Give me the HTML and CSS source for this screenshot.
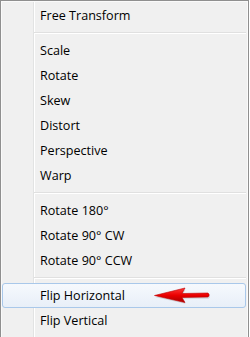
FILE: index.html
```html
<!DOCTYPE html>
<html>
<head>
<meta charset="utf-8">
<link rel="stylesheet" href="styles.css">
</head>
<body>
<div class="menu">
  <div class="item">Free Transform</div>
  <div class="sep"></div>
  <div class="item">Scale</div>
  <div class="item">Rotate</div>
  <div class="item">Skew</div>
  <div class="item">Distort</div>
  <div class="item">Perspective</div>
  <div class="item">Warp</div>
  <div class="sep"></div>
  <div class="item">Rotate 180°</div>
  <div class="item">Rotate 90° CW</div>
  <div class="item">Rotate 90° CCW</div>
  <div class="sep"></div>
  <div class="item hot">Flip Horizontal
    <svg class="arrow" width="58" height="17" viewBox="0 0 58 17">
      <defs>
        <linearGradient id="rg" x1="0" y1="0" x2="0" y2="1">
          <stop offset="0" stop-color="#ff3a3a"/>
          <stop offset="0.5" stop-color="#ea0000"/>
          <stop offset="1" stop-color="#a80000"/>
        </linearGradient>
      </defs>
      <path d="M1 9.5 L31 2 L28 7.5 L54 7 Q57 9 54 11 L28 11 L31 16 Z" fill="#000" opacity="0.12" transform="translate(0.5 0.8)"/>
      <path d="M0.5 8.5 L31 1 L28 6.5 L54 6 Q56.5 8 54 10 L28 10.5 L31 15.5 Z" fill="url(#rg)" stroke="#c00000" stroke-width="0.6" stroke-linejoin="round"/>
    </svg>
  </div>
  <div class="item">Flip Vertical</div>
</div>
</body>
</html>
```
FILE: styles.css
```css
html, body {
  margin: 0;
  padding: 0;
  background: #ffffff;
}
.menu {
  width: 249px;
  height: 345px;
  box-sizing: border-box;
  border: 1px solid #8f8f8f;
  border-bottom: none;
  padding: 2px 0 0 0;
  background: linear-gradient(to right, #f0f0f0 0 32px, #e2e3e3 32px 33px, #ffffff 33px 34px, #f0f0f0 34px);
  box-shadow: inset 1px 1px 0 #fafafa, inset -1px 0 0 #fafafa;
  font-family: "Open Sans", "Noto Sans", sans-serif;
  font-size: 12.6px;
  color: #000000;
}
.item {
  height: 25px;
  line-height: 25px;
  padding-left: 39px;
  white-space: nowrap;
}
.sep {
  height: 10px;
  box-sizing: border-box;
  margin: 0 2px 0 33px;
  padding-top: 4px;
}
.sep::before {
  content: "";
  display: block;
  height: 1px;
  background: #e0e0e0;
  border-bottom: 1px solid #ffffff;
}
.hot {
  position: relative;
  box-sizing: border-box;
  margin: 0 2px 0 1px;
  padding-left: 37px;
  line-height: 23px;
  border: 1px solid #a9c8ea;
  border-radius: 3px;
  background: linear-gradient(#f6f9fd, #e8eff8);
}
.arrow {
  position: absolute;
  left: 151px;
  top: 3px;
}
```
